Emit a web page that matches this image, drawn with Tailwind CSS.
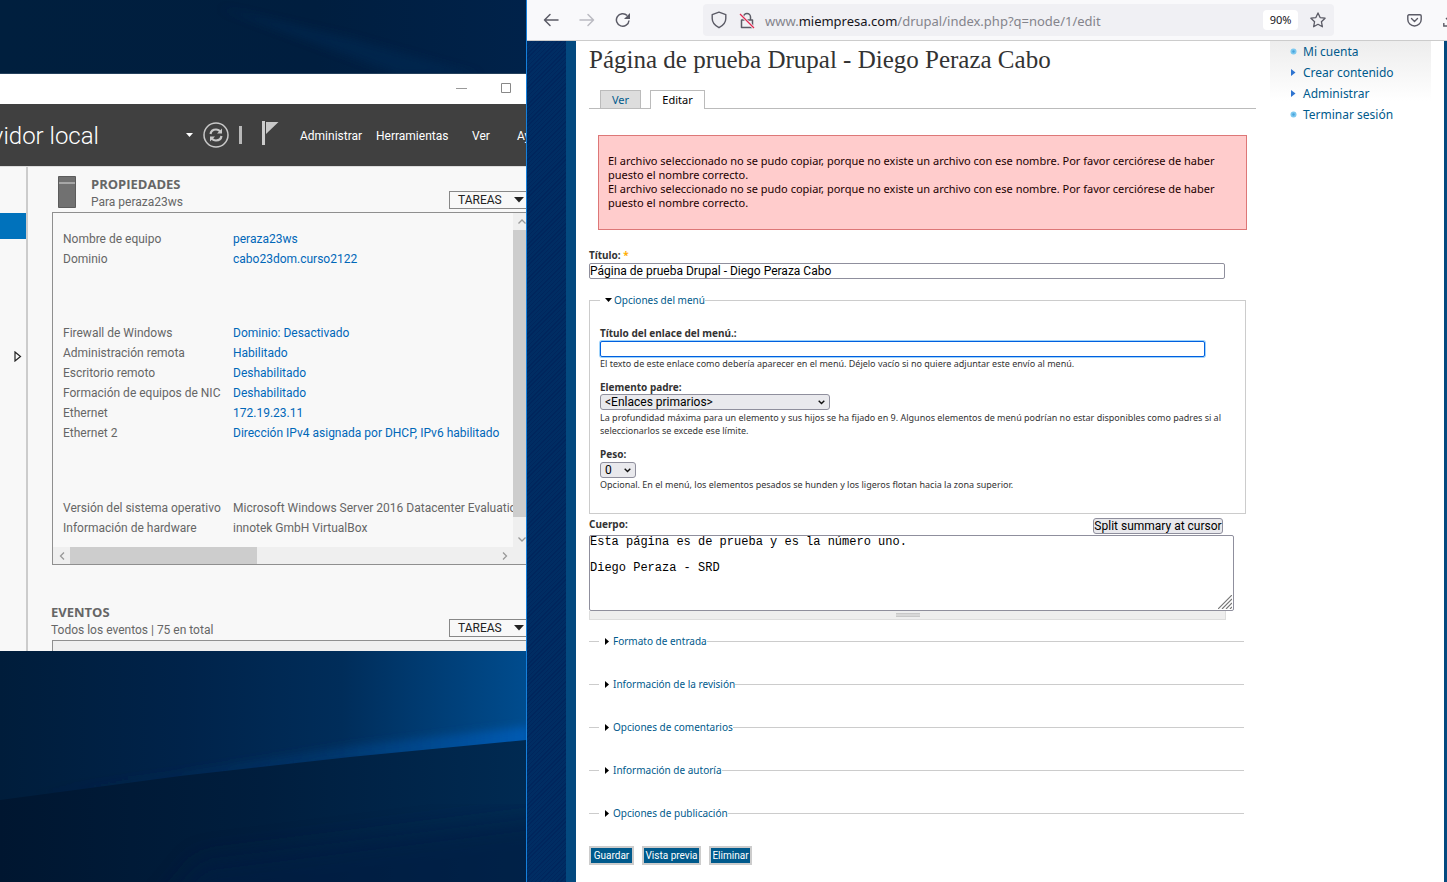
<!DOCTYPE html>
<html lang="es">
<head>
<meta charset="utf-8">
<title>Página de prueba Drupal - Diego Peraza Cabo</title>
<script src="https://cdn.jsdelivr.net/npm/@tailwindcss/browser@4"></script>
</head>
<body class="relative flex h-screen overflow-hidden bg-[#001f3f] font-['Noto_Sans',sans-serif] text-black">

<!-- Desktop wallpaper -->
<svg class="absolute inset-0 h-full w-[526px]" viewBox="0 0 526 882" preserveAspectRatio="none" aria-hidden="true">
  <defs>
    <linearGradient id="sky" x1="0" y1="0" x2="1" y2="0"><stop offset="0" stop-color="#001d3b"/><stop offset=".35" stop-color="#00234a"/><stop offset=".65" stop-color="#002d5a"/><stop offset=".85" stop-color="#003f78"/><stop offset="1" stop-color="#004c8e"/></linearGradient>
    <linearGradient id="ground" x1="0" y1="0" x2="1" y2="0"><stop offset="0" stop-color="#001630"/><stop offset=".5" stop-color="#001e3e"/><stop offset="1" stop-color="#002a52"/></linearGradient>
    <linearGradient id="beam" x1="0" y1="0" x2="1" y2="0"><stop offset="0" stop-color="#00264a" stop-opacity="0"/><stop offset=".6" stop-color="#003d7a" stop-opacity=".5"/><stop offset="1" stop-color="#005bb4"/></linearGradient>
    <linearGradient id="top" x1="0" y1="0" x2="1" y2="0"><stop offset="0" stop-color="#001f3e"/><stop offset=".6" stop-color="#001e3f"/><stop offset="1" stop-color="#00224a"/></linearGradient>
    <filter id="soft"><feGaussianBlur stdDeviation="4"/></filter>
    <filter id="softer"><feGaussianBlur stdDeviation="12"/></filter>
  </defs>
  <rect width="526" height="80" fill="url(#top)"/>
  <path d="M220 8 L350 38 L480 75 L400 75 Z" fill="#002a55" opacity=".5" filter="url(#soft)"/>
  <rect y="640" width="526" height="242" fill="url(#sky)"/>
  <path d="M0 796 L180 772 L350 746 L530 726 L530 750 L350 762 L180 782 Z" fill="url(#beam)" filter="url(#soft)"/>
  <path d="M0 800 L180 776 L350 757 L526 740 V882 H0 Z" fill="url(#ground)"/>
  <path d="M200 860 L560 815 V920 H150 Z" fill="#001f42" opacity=".6" filter="url(#softer)"/>
</svg>

<!-- Server manager window -->
<section class="relative w-[526px] shrink-0 pt-[73px] font-[Roboto,sans-serif] text-xs text-[#666]">
  <div class="flex h-[578px] flex-col overflow-hidden border-t border-[#24405c] bg-[#f8f8f8]">
    <div class="flex h-[30px] shrink-0 items-center justify-end gap-[34px] bg-white pr-[15px] pb-[2px]">
      <button aria-label="Minimizar"><svg width="11" height="11" viewBox="0 0 11 11" stroke="#999" fill="none"><path d="M0 5.5H11"/></svg></button>
      <button aria-label="Maximizar"><svg width="10" height="10" viewBox="0 0 10 10" stroke="#888" fill="none"><path d="M.5.5h9v9h-9z"/></svg></button>
    </div>
    <header class="flex h-[62px] shrink-0 items-center bg-[#404040] text-white">
      <div class="flex w-[99px] shrink-0 justify-end overflow-hidden pt-[2px] text-2xl font-light whitespace-nowrap">vidor local</div>
      <svg class="ml-[87px] shrink-0" width="7" height="4" viewBox="0 0 7 4"><path d="M0 0h7L3.500 4z" fill="#fff"/></svg>
      <button class="ml-[10px] shrink-0" aria-label="Actualizar"><svg width="26" height="26" viewBox="0 0 26 26" fill="none" stroke="#c8c8c8"><circle cx="13" cy="13" r="12" stroke-width="1.500"/><path d="M7.500 12c.5-3 3-4.500 5.500-4.500 2 0 3.500.8 4.500 2.500M18.500 14c-.5 3-3 4.500-5.500 4.500-2 0-3.500-.8-4.500-2.500" stroke-width="2.200"/><path d="M19 6.500v5h-5zM7 19.500v-5h5z" fill="#c8c8c8" stroke="none"/></svg></button>
      <span class="ml-[10px] h-[18px] w-[3px] shrink-0 bg-[#b8b8b8]"></span>
      <svg class="mb-1 ml-[20px] shrink-0" width="17" height="24" viewBox="0 0 17 24"><path d="M0 0h3v24H0z" fill="#ccc"/><path d="M4 1h12.500L4 13z" fill="#c8c8c8"/></svg>
      <nav class="ml-[21px] flex shrink-0 pt-[2px] whitespace-nowrap">
        <a href="#" class="w-[76px]">Administrar</a><a href="#" class="w-[96px]">Herramientas</a><a href="#" class="w-[45px]">Ver</a><a href="#">Ayuda</a>
      </nav>
    </header>
    <div class="flex flex-1 border-t border-[#ddd]">
      <aside class="flex w-[28px] shrink-0 flex-col border-r-2 border-[#ccc] pt-[46px]">
        <span class="h-[26px] bg-[#0072bc]"></span>
        <button class="mt-[112px] ml-[14px]" aria-label="Expandir"><svg width="8" height="11" viewBox="0 0 8 11"><path d="M1 1l5.500 4.500L1 10z" fill="none" stroke="#222" stroke-width="1.200"/></svg></button>
      </aside>
      <main class="min-w-0 flex-1 pl-[23px]">
        <div class="flex h-[45px] items-end pl-[7px]">
          <svg class="mb-1" width="18" height="32" viewBox="0 0 18 32"><path d="M.5.500h17v31H.5z" fill="#717171" stroke="#5c5c5c"/><path d="M1 7h16" stroke="#ddd"/></svg>
          <div class="mb-px ml-[15px] flex-1"><h2 class="font-['Open_Sans',sans-serif] text-[13px] leading-[18px] font-bold">PROPIEDADES</h2><p class="leading-[18px]">Para peraza23ws</p></div>
          <button class="mb-[3px] flex h-[18px] w-[77px] items-center justify-between border border-r-0 border-[#888] pr-[2px] pl-2 text-[#222]">TAREAS<svg width="10" height="6" viewBox="0 0 10 6"><path d="M0 0h10L5 5.500z" fill="#222"/></svg></button>
        </div>
        <div class="ml-px grid h-[353px] grid-cols-[1fr_13px] grid-rows-[1fr_17px] border border-r-0 border-[#8f8f8f]">
          <dl class="grid min-w-0 grid-cols-[170px_1fr] content-start overflow-hidden pt-[16px] pl-[10px] leading-5 whitespace-nowrap [&_a]:text-[#0067b8]">
            <dt>Nombre de equipo</dt><dd><a href="#">peraza23ws</a></dd>
            <dt>Dominio</dt><dd class="pb-[54px]"><a href="#">cabo23dom.curso2122</a></dd>
            <dt>Firewall de Windows</dt><dd><a href="#">Dominio: Desactivado</a></dd>
            <dt>Administración remota</dt><dd><a href="#">Habilitado</a></dd>
            <dt>Escritorio remoto</dt><dd><a href="#">Deshabilitado</a></dd>
            <dt>Formación de equipos de NIC</dt><dd><a href="#">Deshabilitado</a></dd>
            <dt>Ethernet</dt><dd><a href="#">172.19.23.11</a></dd>
            <dt>Ethernet 2</dt><dd class="pb-[55px]"><a href="#">Dirección IPv4 asignada por DHCP, IPv6 habilitado</a></dd>
            <dt>Versión del sistema operativo</dt><dd>Microsoft Windows Server 2016 Datacenter Evaluation</dd>
            <dt>Información de hardware</dt><dd>innotek GmbH VirtualBox</dd>
          </dl>
          <div class="flex flex-col items-center bg-[#efefef]">
            <span class="flex h-[17px] items-center pl-1"><svg width="8" height="5" viewBox="0 0 8 5"><path d="M.5 4.500L4 1l3.500 3.500" fill="none" stroke="#999" stroke-width="1.300"/></svg></span>
            <span class="h-[287px] w-full bg-[#cdcdcd]"></span>
            <span class="flex flex-1 items-end pb-[5px] pl-1"><svg width="8" height="5" viewBox="0 0 8 5"><path d="M.5.500L4 4 7.500.500" fill="none" stroke="#999" stroke-width="1.300"/></svg></span>
          </div>
          <div class="flex items-center bg-[#efefef]">
            <span class="w-[17px] pl-[6px]"><svg width="6" height="8" viewBox="0 0 6 8"><path d="M5 .5L1.500 4 5 7.500" fill="none" stroke="#999" stroke-width="1.300"/></svg></span>
            <span class="h-full w-[187px] bg-[#cdcdcd]"></span>
            <span class="ml-auto pr-[5px]"><svg width="6" height="8" viewBox="0 0 6 8"><path d="M1 .5L4.500 4 1 7.500" fill="none" stroke="#999" stroke-width="1.300"/></svg></span>
          </div>
          <div class="bg-[#efefef]"></div>
        </div>
        <div class="mt-[38px] flex items-end">
          <div class="flex-1"><h2 class="font-['Open_Sans',sans-serif] text-[13px] leading-[18px] font-bold">EVENTOS</h2><p class="leading-[18px]">Todos los eventos | 75 en total</p></div>
          <button class="mb-[2px] flex h-[18px] w-[77px] items-center justify-between border border-r-0 border-[#888] pr-[2px] pl-2 text-[#222]">TAREAS<svg width="10" height="6" viewBox="0 0 10 6"><path d="M0 0h10L5 5.500z" fill="#222"/></svg></button>
        </div>
        <div class="mt-px ml-px h-5 border-t border-l border-[#8f8f8f] bg-[#efefef]"></div>
      </main>
    </div>
  </div>
</section>

<!-- Browser window -->
<section class="relative flex min-w-0 flex-1 flex-col border-l border-[#1580dc] bg-white">
  <div class="flex h-[41px] shrink-0 items-center overflow-hidden border-b border-[#ccc] bg-[#f9f9fb] pl-4 text-[#5b5b66]">
    <button aria-label="Atrás"><svg width="16" height="14" viewBox="0 0 16 14" fill="none" stroke="#5b5b66" stroke-width="1.500" stroke-linecap="round" stroke-linejoin="round"><path d="M15 7H1.500M7 1.500L1.500 7 7 12.500"/></svg></button>
    <button class="ml-5" aria-label="Adelante"><svg width="16" height="14" viewBox="0 0 16 14" fill="none" stroke="#bbbbc2" stroke-width="1.500" stroke-linecap="round" stroke-linejoin="round"><path d="M1 7h13.500M9 1.500L14.500 7 9 12.500"/></svg></button>
    <button class="ml-5" aria-label="Recargar"><svg width="16" height="16" viewBox="0 0 16 16" fill="none" stroke="#5b5b66" stroke-width="1.500"><path d="M14 8.500A6.300 6.300 0 1 1 12.200 3.500"/><path d="M15 1v6H9z" fill="#5b5b66" stroke="none"/></svg></button>
    <div class="ml-[72px] flex h-8 w-[631px] shrink-0 items-center rounded bg-[#f0f0f4] px-2">
      <svg width="16" height="18" viewBox="0 0 16 18" fill="none" stroke="#5b5b66" stroke-width="1.400" stroke-linejoin="round"><path d="M8 1.200L14.800 3.600V7.500c0 4.200-2.600 7-6.800 9.200C3.800 14.500 1.200 11.700 1.200 7.500V3.600z"/></svg>
      <svg class="ml-3" width="16" height="17" viewBox="0 0 16 17" fill="none"><path d="M4.500 7.500V5a3.500 3.500 0 0 1 7 0v2.500M2.500 8h11v7.500h-11z" stroke="#5b5b66" stroke-width="1.500" stroke-linejoin="round"/><path d="M1 2l14 14" stroke="#f0f0f4" stroke-width="3"/><path d="M1 2l14 14" stroke="#e22850" stroke-width="1.300"/></svg>
      <div class="flex-1 pt-[3px] pl-[10px] text-[13px] whitespace-nowrap text-[#84848c]">www.<span class="text-[#15141a]">miempresa.com</span>/drupal/index.php?q=node/1/edit</div>
      <button class="h-5 w-[35px] rounded-sm bg-white text-[11px] text-[#15141a]">90%</button>
      <button class="ml-3" aria-label="Añadir a marcadores"><svg width="16" height="16" viewBox="0 0 16 16" fill="none" stroke="#5b5b66" stroke-width="1.300" stroke-linejoin="round"><path d="M8 .9l2.100 4.700 5 .6-3.700 3.500 1 5.100L8 12.300l-4.400 2.500 1-5.100L.9 6.200l5-.6z"/></svg></button>
    </div>
    <button class="ml-[73px] shrink-0" aria-label="Pocket"><svg width="15" height="13" viewBox="0 0 15 13" fill="none" stroke="#5b5b66" stroke-width="1.400" stroke-linecap="round" stroke-linejoin="round"><path d="M2 .8h11a1.200 1.200 0 0 1 1.200 1.200v3.500a6.700 6.500 0 0 1-13.400 0V2A1.200 1.200 0 0 1 2 .8z"/><path d="M4.500 4.500l3 3 3-3"/></svg></button>
    <button class="ml-[21px] shrink-0" aria-label="Descargas"><svg width="15" height="16" viewBox="0 0 15 16" fill="none" stroke="#5b5b66" stroke-width="1.400"><path d="M7.500 1v9M3 6l4.500 4.500L12 6M.8 11v3h13.400v-3"/></svg></button>
  </div>

  <div class="flex min-h-0 flex-1">
    <div class="w-[39px] shrink-0 bg-[#002a5f] bg-[repeating-linear-gradient(135deg,#00265d_0_1px,#002d63_1px_3px)]"></div>
    <div class="w-[10px] shrink-0 bg-[#03497f]"></div>
    <main class="min-w-0 flex-1 pt-[5px] pl-[13px] text-[11px]">
      <h1 class="font-['Liberation_Serif',serif] text-[25px] leading-7 text-[#333]">Página de prueba Drupal - Diego Peraza Cabo</h1>
      <nav class="mt-4 mr-[14px] flex h-[19px] gap-[9px] border-b border-[#bbb] pl-[11px] leading-[17px]">
        <a href="#" class="h-[18px] w-[41px] border border-b-0 border-[#bbb] bg-[#ddd] text-center text-[#005a8c]">Ver</a>
        <a href="#" class="h-[19px] w-[55px] border border-b-0 border-[#bbb] bg-white text-center">Editar</a>
      </nav>
      <div role="alert" class="mt-[26px] mr-[23px] ml-[9px] h-[95px] border border-[#dd7777] bg-[#fcc] px-[9px] pt-[18px] leading-[14px] text-[#200]">
        <p>El archivo seleccionado no se pudo copiar, porque no existe un archivo con ese nombre. Por favor cerciórese de haber puesto el nombre correcto.</p>
        <p>El archivo seleccionado no se pudo copiar, porque no existe un archivo con ese nombre. Por favor cerciórese de haber puesto el nombre correcto.</p>
      </div>
      <form class="mt-[19px] mr-6 text-[10px] leading-[13px] text-[#333]">
        <label for="title" class="block font-bold">Título: <span class="text-[#ffae00]">*</span></label>
        <input id="title" class="mt-px block h-4 w-[636px] rounded-xs border border-[#8f8f9d] bg-white font-[Roboto,sans-serif] text-xs text-black" value="Página de prueba Drupal - Diego Peraza Cabo">

        <fieldset class="mt-[14px] h-[221px] border border-[#ccc] px-[10px]">
          <legend class="pl-[5px] text-[#005a8c]"><button type="button" class="flex h-[14px] items-center gap-[2px]"><svg width="7" height="4" viewBox="0 0 7 4"><path d="M0 0h7L3.500 4z" fill="#000"/></svg>Opciones del menú</button></legend>
          <label for="link" class="mt-5 block font-bold">Título del enlace del menú.:</label>
          <input id="link" class="mt-px block h-4 w-[605px] rounded-xs border border-[#0060df] bg-white font-[Roboto,sans-serif] text-xs ring-1 ring-[#9fd3fb] outline-none">
          <p class="text-[9px]">El texto de este enlace como debería aparecer en el menú. Déjelo vacío si no quiere adjuntar este envío al menú.</p>
          <label for="parent" class="mt-[11px] block font-bold">Elemento padre:</label>
          <div class="grid w-[230px] items-center">
            <select id="parent" class="col-start-1 row-start-1 h-4 appearance-none rounded-[3px] border border-[#8f8f9d] bg-[#e9e9ed] px-1 font-[Roboto,sans-serif] text-xs leading-[14px] text-black"><option>&lt;Enlaces primarios&gt;</option></select>
            <svg class="pointer-events-none col-start-1 row-start-1 mr-[5px] justify-self-end" width="7" height="5" viewBox="0 0 7 5"><path d="M.7.800l2.800 2.800L6.300.800" fill="none" stroke="#111" stroke-width="1.400"/></svg>
          </div>
          <p class="mt-px text-[9px]">La profundidad máxima para un elemento y sus hijos se ha fijado en 9. Algunos elementos de menú podrían no estar disponibles como padres si al seleccionarlos se excede ese límite.</p>
          <label for="weight" class="mt-[11px] block font-bold">Peso:</label>
          <div class="mt-px grid w-9 items-center">
            <select id="weight" class="col-start-1 row-start-1 h-4 appearance-none rounded-[3px] border border-[#8f8f9d] bg-[#e9e9ed] px-1 font-[Roboto,sans-serif] text-xs leading-[14px] text-black"><option>0</option></select>
            <svg class="pointer-events-none col-start-1 row-start-1 mr-[5px] justify-self-end" width="7" height="5" viewBox="0 0 7 5"><path d="M.7.800l2.800 2.800L6.300.800" fill="none" stroke="#111" stroke-width="1.400"/></svg>
          </div>
          <p class="text-[9px]">Opcional. En el menú, los elementos pesados se hunden y los ligeros flotan hacia la zona superior.</p>
        </fieldset>

        <div class="mt-1 flex h-[17px] items-start justify-between pr-[23px]">
          <label for="body" class="font-bold">Cuerpo:</label>
          <button type="button" class="h-4 w-[130px] rounded-[3px] border border-[#8f8f9d] bg-[#e9e9ed] font-[Roboto,sans-serif] text-xs leading-[14px] whitespace-nowrap text-black">Split summary at cursor</button>
        </div>
        <div class="mr-3 grid">
          <textarea id="body" class="col-start-1 row-start-1 block h-[76px] w-full resize-none rounded-xs border border-[#8f8f9d] bg-white font-['Liberation_Mono',monospace] text-xs leading-[13px] text-black">Esta página es de prueba y es la número uno.

Diego Peraza - SRD</textarea>
          <svg class="pointer-events-none col-start-1 row-start-1 mr-[2px] mb-[2px] self-end justify-self-end" width="14" height="14" viewBox="0 0 14 14" stroke="#777" stroke-width="1.200"><path d="M0 14L14 0M4 14L14 4M8 14l6-6M12 14l2-2"/></svg>
        </div>
        <div class="mr-5 flex h-[9px] items-center justify-center border border-t-0 border-[#ddd] bg-[#eee]"><span class="h-1 w-6 border-y border-[#c8c8c8] bg-[#d8d8d8]"></span></div>

        <fieldset class="mt-[14px] mr-[2px] h-[29px] border-t border-[#ccc] pl-[10px]"><legend class="pl-[6px] text-[#005a8c]"><button type="button" class="flex h-[14px] items-center gap-1"><svg width="4" height="7" viewBox="0 0 4 7"><path d="M0 0l4 3.500L0 7z" fill="#000"/></svg>Formato de entrada</button></legend></fieldset>
        <fieldset class="mt-[14px] mr-[2px] h-[29px] border-t border-[#ccc] pl-[10px]"><legend class="pl-[6px] text-[#005a8c]"><button type="button" class="flex h-[14px] items-center gap-1"><svg width="4" height="7" viewBox="0 0 4 7"><path d="M0 0l4 3.500L0 7z" fill="#000"/></svg>Información de la revisión</button></legend></fieldset>
        <fieldset class="mt-[14px] mr-[2px] h-[29px] border-t border-[#ccc] pl-[10px]"><legend class="pl-[6px] text-[#005a8c]"><button type="button" class="flex h-[14px] items-center gap-1"><svg width="4" height="7" viewBox="0 0 4 7"><path d="M0 0l4 3.500L0 7z" fill="#000"/></svg>Opciones de comentarios</button></legend></fieldset>
        <fieldset class="mt-[14px] mr-[2px] h-[29px] border-t border-[#ccc] pl-[10px]"><legend class="pl-[6px] text-[#005a8c]"><button type="button" class="flex h-[14px] items-center gap-1"><svg width="4" height="7" viewBox="0 0 4 7"><path d="M0 0l4 3.500L0 7z" fill="#000"/></svg>Información de autoría</button></legend></fieldset>
        <fieldset class="mt-[14px] mr-[2px] h-[29px] border-t border-[#ccc] pl-[10px]"><legend class="pl-[6px] text-[#005a8c]"><button type="button" class="flex h-[14px] items-center gap-1"><svg width="4" height="7" viewBox="0 0 4 7"><path d="M0 0l4 3.500L0 7z" fill="#000"/></svg>Opciones de publicación</button></legend></fieldset>

        <div class="mt-[11px] flex gap-2 font-[Roboto,sans-serif] text-white">
          <button type="button" class="h-[19px] w-[45px] border-2 border-[#ccc] bg-[#005a8c] whitespace-nowrap">Guardar</button>
          <button type="button" class="h-[19px] w-[59px] border-2 border-[#ccc] bg-[#005a8c] whitespace-nowrap">Vista previa</button>
          <button type="button" class="h-[19px] w-[43px] border-2 border-[#ccc] bg-[#005a8c] whitespace-nowrap">Eliminar</button>
        </div>
      </form>
    </main>
    <aside class="mr-[13px] w-[161px] shrink-0">
      <ul class="h-[60px] bg-linear-to-b from-[#ededed] to-white pl-5 text-xs leading-[21px] text-[#005a8c]">
        <li class="flex items-center gap-[6px]"><svg width="7" height="7" viewBox="0 0 7 7"><circle cx="3.500" cy="3.500" r="3" fill="#7cc8ef"/><circle cx="3.500" cy="3.500" r="1.200" fill="#4aa3dc"/></svg><a href="#">Mi cuenta</a></li>
        <li class="flex items-center gap-[6px]"><svg width="7" height="7" viewBox="0 0 7 7"><path d="M1 0l4.500 3.500L1 7z" fill="#2f74d0"/></svg><a href="#">Crear contenido</a></li>
        <li class="flex items-center gap-[6px]"><svg width="7" height="7" viewBox="0 0 7 7"><path d="M1 0l4.500 3.500L1 7z" fill="#2f74d0"/></svg><a href="#">Administrar</a></li>
        <li class="flex items-center gap-[6px]"><svg width="7" height="7" viewBox="0 0 7 7"><circle cx="3.500" cy="3.500" r="3" fill="#7cc8ef"/><circle cx="3.500" cy="3.500" r="1.200" fill="#4aa3dc"/></svg><a href="#">Terminar sesión</a></li>
      </ul>
    </aside>
    <div class="w-[3px] shrink-0 bg-[#03497f]"></div>
  </div>
</section>
</body>
</html>
